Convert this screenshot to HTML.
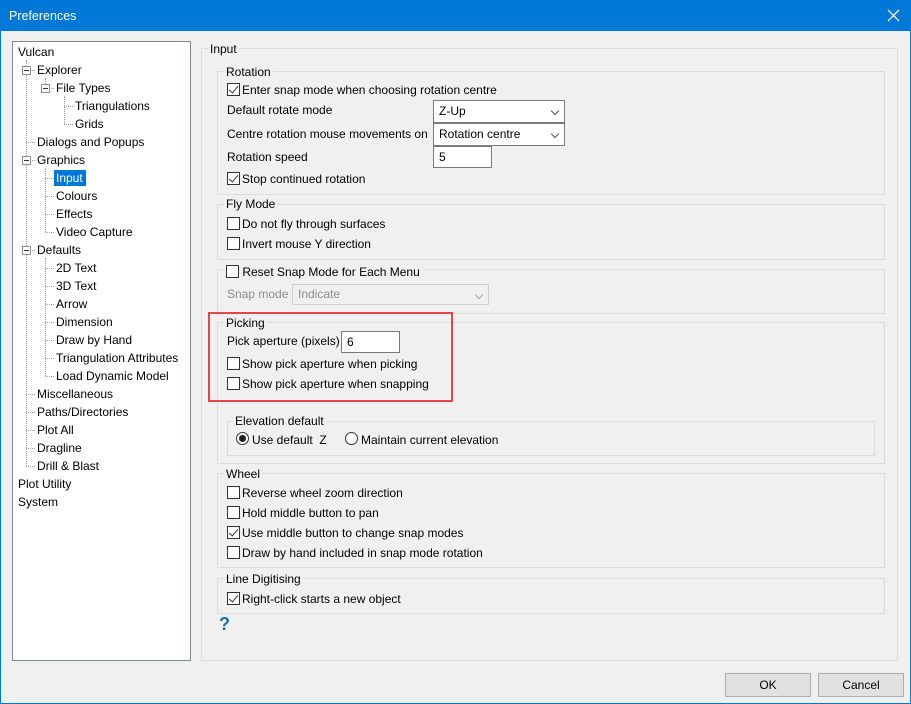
<!DOCTYPE html>
<html><head><meta charset="utf-8"><style>
*{box-sizing:border-box;margin:0;padding:0}
body{width:911px;height:704px;background:#f0f0f0;font-family:"Liberation Sans",sans-serif;font-size:12px;color:#000;position:relative;overflow:hidden}
.a{position:absolute;white-space:nowrap;line-height:16px;transform:translateY(1px)}
.g{position:absolute;border:1px solid #dcdcdc}
.gl{position:absolute;background:#f0f0f0;padding:0 2px;line-height:16px;white-space:nowrap}
.cb{position:absolute;width:13px;height:13px;border:1px solid #333;background:#fff}
.cb.c::after{content:"";position:absolute;left:3px;top:0px;width:4px;height:8px;border:solid #333;border-width:0 1.5px 1.5px 0;transform:rotate(40deg)}
.box{position:absolute;background:#fff;border:1px solid #7a7a7a;line-height:20px;padding-left:5px}
.arr{position:absolute;right:6px;top:7px;width:6px;height:6px;border:solid #555;border-width:0 1px 1px 0;transform:rotate(45deg)}
.vd{position:absolute;border-left:1px dotted #a0a0a0;width:0}
.hd{position:absolute;border-top:1px dotted #a0a0a0;height:0}
.pm{position:absolute;width:9px;height:9px;border:1px solid #919191;background:#fff}
.pm::after{content:"";position:absolute;left:1px;top:3px;width:5px;height:1px;background:#333}
.btn{position:absolute;border:1px solid #adadad;background:#e1e1e1;text-align:center;line-height:22px}
</style></head><body>
<div style="position:absolute;left:0;top:0;width:911px;height:31px;background:#0078d7"></div>
<div class="a" style="left:9px;top:7px;color:#fff;font-size:12.5px">Preferences</div>
<svg style="position:absolute;left:887px;top:9px" width="13" height="13"><path d="M1 1L12 12M12 1L1 12" stroke="#fff" stroke-width="1.3"/></svg>
<div style="position:absolute;left:0;top:31px;width:1px;height:673px;background:#0078d7"></div>
<div style="position:absolute;left:910px;top:31px;width:1px;height:673px;background:#0078d7"></div>
<div style="position:absolute;left:0;top:703px;width:911px;height:1px;background:#0078d7"></div>

<div style="position:absolute;left:12px;top:41px;width:179px;height:620px;background:#fff;border:1px solid #828790"></div>
<div class="vd" style="left:26px;top:60px;height:406px"></div>
<div class="vd" style="left:45px;top:78px;height:10px"></div>
<div class="vd" style="left:64px;top:96px;height:28px"></div>
<div class="vd" style="left:45px;top:168px;height:64px"></div>
<div class="vd" style="left:45px;top:258px;height:118px"></div>
<div class="hd" style="left:26px;top:70px;width:9px"></div>
<div class="hd" style="left:45px;top:88px;width:9px"></div>
<div class="hd" style="left:64px;top:106px;width:9px"></div>
<div class="hd" style="left:64px;top:124px;width:9px"></div>
<div class="hd" style="left:26px;top:142px;width:9px"></div>
<div class="hd" style="left:26px;top:160px;width:9px"></div>
<div class="hd" style="left:45px;top:178px;width:9px"></div>
<div class="hd" style="left:45px;top:196px;width:9px"></div>
<div class="hd" style="left:45px;top:214px;width:9px"></div>
<div class="hd" style="left:45px;top:232px;width:9px"></div>
<div class="hd" style="left:26px;top:250px;width:9px"></div>
<div class="hd" style="left:45px;top:268px;width:9px"></div>
<div class="hd" style="left:45px;top:286px;width:9px"></div>
<div class="hd" style="left:45px;top:304px;width:9px"></div>
<div class="hd" style="left:45px;top:322px;width:9px"></div>
<div class="hd" style="left:45px;top:340px;width:9px"></div>
<div class="hd" style="left:45px;top:358px;width:9px"></div>
<div class="hd" style="left:45px;top:376px;width:9px"></div>
<div class="hd" style="left:26px;top:394px;width:9px"></div>
<div class="hd" style="left:26px;top:412px;width:9px"></div>
<div class="hd" style="left:26px;top:430px;width:9px"></div>
<div class="hd" style="left:26px;top:448px;width:9px"></div>
<div class="hd" style="left:26px;top:466px;width:9px"></div>
<div class="pm" style="left:22px;top:66px"></div>
<div class="pm" style="left:41px;top:84px"></div>
<div class="pm" style="left:22px;top:156px"></div>
<div class="pm" style="left:22px;top:246px"></div>
<div class="a" style="left:18px;top:43px">Vulcan</div>
<div class="a" style="left:37px;top:61px">Explorer</div>
<div class="a" style="left:56px;top:79px">File Types</div>
<div class="a" style="left:75px;top:97px">Triangulations</div>
<div class="a" style="left:75px;top:115px">Grids</div>
<div class="a" style="left:37px;top:133px">Dialogs and Popups</div>
<div class="a" style="left:37px;top:151px">Graphics</div>
<div style="position:absolute;left:54px;top:170px;width:32px;height:16px;background:#0078d7"></div>
<div class="a" style="left:56px;top:169px;color:#fff">Input</div>
<div class="a" style="left:56px;top:187px">Colours</div>
<div class="a" style="left:56px;top:205px">Effects</div>
<div class="a" style="left:56px;top:223px">Video Capture</div>
<div class="a" style="left:37px;top:241px">Defaults</div>
<div class="a" style="left:56px;top:259px">2D Text</div>
<div class="a" style="left:56px;top:277px">3D Text</div>
<div class="a" style="left:56px;top:295px">Arrow</div>
<div class="a" style="left:56px;top:313px">Dimension</div>
<div class="a" style="left:56px;top:331px">Draw by Hand</div>
<div class="a" style="left:56px;top:349px">Triangulation Attributes</div>
<div class="a" style="left:56px;top:367px">Load Dynamic Model</div>
<div class="a" style="left:37px;top:385px">Miscellaneous</div>
<div class="a" style="left:37px;top:403px">Paths/Directories</div>
<div class="a" style="left:37px;top:421px">Plot All</div>
<div class="a" style="left:37px;top:439px">Dragline</div>
<div class="a" style="left:37px;top:457px">Drill &amp; Blast</div>
<div class="a" style="left:18px;top:475px">Plot Utility</div>
<div class="a" style="left:18px;top:493px">System</div>

<div class="g" style="left:201px;top:48px;width:697px;height:613px"></div>
<div class="gl" style="left:208px;top:41px">Input</div>

<div class="g" style="left:217px;top:71px;width:668px;height:124px"></div>
<div class="gl" style="left:224px;top:64px">Rotation</div>
<div class="cb c" style="left:227px;top:83px"></div><div class="a" style="left:242px;top:81px">Enter snap mode when choosing rotation centre</div>
<div class="a" style="left:227px;top:101px">Default rotate mode</div>
<div class="box" style="left:433px;top:100px;width:132px;height:23px">Z-Up<div class="arr"></div></div>
<div class="a" style="left:227px;top:125px">Centre rotation mouse movements on</div>
<div class="box" style="left:433px;top:123px;width:132px;height:23px">Rotation centre<div class="arr"></div></div>
<div class="a" style="left:227px;top:148px">Rotation speed</div>
<div class="box" style="left:433px;top:146px;width:59px;height:22px">5</div>
<div class="cb c" style="left:227px;top:172px"></div><div class="a" style="left:242px;top:170px">Stop continued rotation</div>

<div class="g" style="left:217px;top:204px;width:668px;height:56px"></div>
<div class="gl" style="left:224px;top:196px">Fly Mode</div>
<div class="cb" style="left:227px;top:217px"></div><div class="a" style="left:242px;top:215px">Do not fly through surfaces</div>
<div class="cb" style="left:227px;top:237px"></div><div class="a" style="left:242px;top:235px">Invert mouse Y direction</div>

<div class="g" style="left:217px;top:269px;width:668px;height:45px"></div>
<div class="gl" style="left:224px;top:264px;padding-right:4px"><span class="cb" style="position:relative;display:inline-block;vertical-align:-2px;left:0;top:0"></span> Reset Snap Mode for Each Menu</div>
<div class="a" style="left:227px;top:285px;color:#8d8d8d">Snap mode</div>
<div class="box" style="left:292px;top:284px;width:197px;height:21px;background:#f0f0f0;border-color:#cfcfcf;color:#8d8d8d;line-height:19px">Indicate<div class="arr" style="border-color:#aaa"></div></div>

<div class="g" style="left:217px;top:322px;width:668px;height:142px"></div>
<div class="gl" style="left:224px;top:315px">Picking</div>
<div class="a" style="left:227px;top:332px">Pick aperture (pixels)</div>
<div class="box" style="left:341px;top:331px;width:59px;height:22px">6</div>
<div class="cb" style="left:227px;top:357px"></div><div class="a" style="left:242px;top:355px">Show pick aperture when picking</div>
<div class="cb" style="left:227px;top:377px"></div><div class="a" style="left:242px;top:375px">Show pick aperture when snapping</div>
<div style="position:absolute;left:208px;top:312px;width:245px;height:90px;border:2px solid #e04848"></div>
<div class="g" style="left:227px;top:421px;width:648px;height:35px"></div>
<div class="gl" style="left:233px;top:413px">Elevation default</div>
<div style="position:absolute;left:236px;top:432px;width:13px;height:13px;border:1px solid #333;border-radius:50%;background:#fff"><div style="position:absolute;left:2px;top:2px;width:7px;height:7px;border-radius:50%;background:#222"></div></div>
<div class="a" style="left:252px;top:431px">Use default&nbsp; Z</div>
<div style="position:absolute;left:345px;top:432px;width:13px;height:13px;border:1px solid #333;border-radius:50%;background:#fff"></div>
<div class="a" style="left:361px;top:431px">Maintain current elevation</div>

<div class="g" style="left:217px;top:473px;width:668px;height:95px"></div>
<div class="gl" style="left:224px;top:466px">Wheel</div>
<div class="cb" style="left:227px;top:486px"></div><div class="a" style="left:242px;top:484px">Reverse wheel zoom direction</div>
<div class="cb" style="left:227px;top:506px"></div><div class="a" style="left:242px;top:504px">Hold middle button to pan</div>
<div class="cb c" style="left:227px;top:526px"></div><div class="a" style="left:242px;top:524px">Use middle button to change snap modes</div>
<div class="cb" style="left:227px;top:546px"></div><div class="a" style="left:242px;top:544px">Draw by hand included in snap mode rotation</div>

<div class="g" style="left:217px;top:578px;width:668px;height:36px"></div>
<div class="gl" style="left:224px;top:571px">Line Digitising</div>
<div class="cb c" style="left:227px;top:592px"></div><div class="a" style="left:242px;top:590px">Right-click starts a new object</div>
<div class="a" style="left:219px;top:612px;color:#1a6fb0;font-weight:bold;font-size:18px;line-height:22px">?</div>

<div class="btn" style="left:725px;top:673px;width:86px;height:24px">OK</div>
<div class="btn" style="left:818px;top:673px;width:86px;height:24px">Cancel</div>
</body></html>
